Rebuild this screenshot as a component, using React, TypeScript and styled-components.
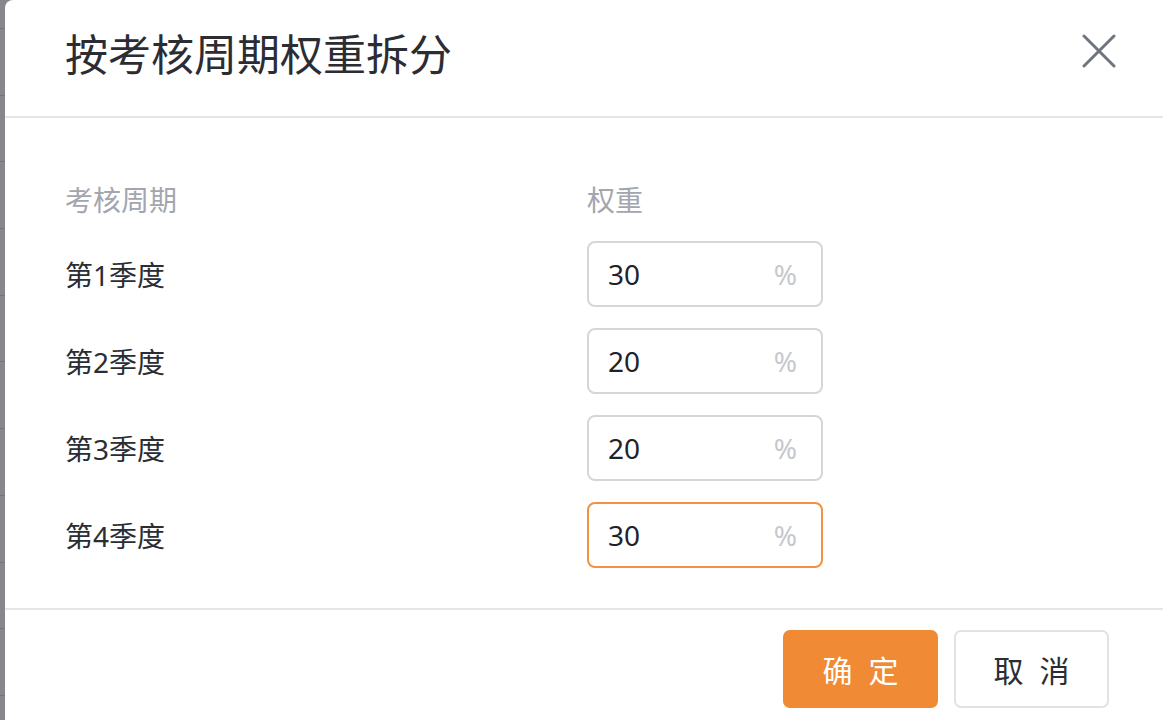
import React from "react";
import styled, { createGlobalStyle, css } from "styled-components";

const GlobalStyle = createGlobalStyle`
  html, body {
    margin: 0;
    padding: 0;
    height: 100%;
  }
  body {
    font-family: "Noto Sans", "Noto Sans CJK SC", sans-serif;
    overflow: hidden;
  }
`;

const Backdrop = styled.div`
  display: flex;
  align-items: flex-start;
  height: 720px;
  overflow: hidden;
  background-color: #86878b;
  background-image: repeating-linear-gradient(
    to bottom,
    transparent 0,
    transparent 28px,
    #74757a 28px,
    #74757a 29px,
    transparent 29px,
    transparent 66.7px
  );
`;

const Dialog = styled.div`
  margin-left: 5px;
  width: 1158px;
  min-height: 760px;
  flex-shrink: 0;
  background: #fff;
  border-radius: 8px 0 0 0;
  display: flex;
  flex-direction: column;

  & > * {
    flex-shrink: 0;
  }
`;

const Header = styled.div`
  height: 116px;
  display: flex;
  align-items: center;
  justify-content: space-between;
  padding: 0 47px 0 60px;
  border-bottom: 2px solid #e4e5ea;
`;

const Title = styled.h2`
  margin: 0;
  font-size: 43px;
  font-weight: 400;
  color: #2b2d33;
  line-height: 1;
  margin-top: -8px;
`;

const CloseButton = styled.button`
  border: none;
  background: none;
  padding: 0;
  width: 34px;
  height: 34px;
  display: flex;
  align-items: center;
  justify-content: center;
  color: #6e7480;
  margin-top: -14px;
  cursor: pointer;
`;

const Body = styled.div`
  display: grid;
  grid-template-columns: 522px 236px;
  grid-template-rows: 43px;
  grid-auto-rows: 66px;
  row-gap: 21px;
  padding: 59px 0 40px 60px;
  border-bottom: 2px solid #e4e5ea;
`;

const ColumnHead = styled.div`
  font-size: 28px;
  color: #a3a6ae;
  display: flex;
  align-items: center;
`;

const Label = styled.div`
  font-size: 28px;
  color: #2a2d33;
  display: flex;
  align-items: center;
`;

const InputBox = styled.div<{ $focused?: boolean }>`
  box-sizing: border-box;
  height: 66px;
  border: 2px solid #d4d6dc;
  border-radius: 8px;
  display: flex;
  align-items: center;
  padding: 0 24px 0 19px;
  ${(p) =>
    p.$focused &&
    css`
      border-color: #f0923f;
    `}
`;

const Value = styled.span`
  flex: 1;
  font-size: 28px;
  color: #1f2329;
`;

const Unit = styled.span`
  font-size: 28px;
  color: #c5c8ce;
`;

const Footer = styled.div`
  display: flex;
  justify-content: flex-end;
  gap: 16px;
  padding: 20px 54px 0 0;
`;

const Button = styled.button<{ $primary?: boolean }>`
  box-sizing: border-box;
  width: 155px;
  height: 78px;
  border-radius: 7px;
  font-family: "Noto Sans", "Noto Sans CJK SC", sans-serif;
  font-size: 30px;
  letter-spacing: 16px;
  text-indent: 16px;
  border: 2px solid #e0e2e8;
  background: #fff;
  color: #2a2d33;
  cursor: pointer;
  ${(p) =>
    p.$primary &&
    css`
      background: #f08a35;
      border-color: #f08a35;
      color: #fff;
    `}
`;

const periods = [
  { name: "第1季度", value: "30" },
  { name: "第2季度", value: "20" },
  { name: "第3季度", value: "20" },
  { name: "第4季度", value: "30", focused: true },
];

const App = () => {
  return (
    <>
      <GlobalStyle />
      <Backdrop>
        <Dialog>
          <Header>
            <Title>按考核周期权重拆分</Title>
            <CloseButton aria-label="关闭">
              <svg width="34" height="34" viewBox="0 0 34 34" fill="none">
                <path
                  d="M2 2 L32 32 M32 2 L2 32"
                  stroke="currentColor"
                  strokeWidth="3"
                  strokeLinecap="round"
                />
              </svg>
            </CloseButton>
          </Header>
          <Body>
            <ColumnHead>考核周期</ColumnHead>
            <ColumnHead>权重</ColumnHead>
            {periods.map((p) => (
              <React.Fragment key={p.name}>
                <Label>{p.name}</Label>
                <InputBox $focused={p.focused}>
                  <Value>{p.value}</Value>
                  <Unit>%</Unit>
                </InputBox>
              </React.Fragment>
            ))}
          </Body>
          <Footer>
            <Button $primary>确定</Button>
            <Button>取消</Button>
          </Footer>
        </Dialog>
      </Backdrop>
    </>
  );
};

export default App;
